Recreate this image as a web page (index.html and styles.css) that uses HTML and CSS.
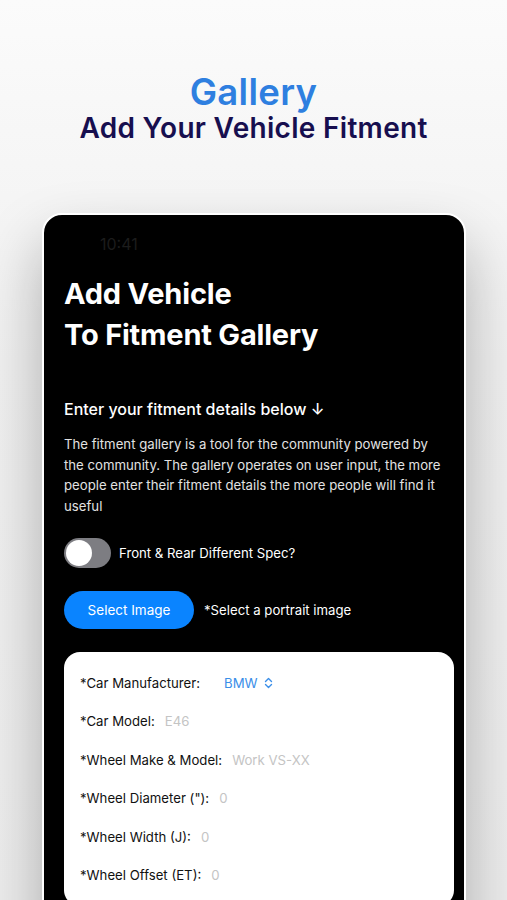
FILE: index.html
```html
<!DOCTYPE html>
<html lang="en">
<head>
	<meta charset="UTF-8">
	<title>Gallery</title>
	<link rel="stylesheet" href="styles.css">
</head>
<body>
	<div class="header">
		<h1 class="title">Gallery</h1>
		<p class="subtitle">Add Your Vehicle Fitment</p>
	</div>

	<div class="phone">
		<div class="statusBar">10:41</div>
		<h2 class="pageTitle">Add Vehicle<br>To Fitment Gallery</h2>
		<h3 class="sectionTitle">Enter your fitment details below ↓</h3>
		<p class="intro">The fitment gallery is a tool for the community powered by the community. The gallery operates on user input, the more people enter their fitment details the more people will find it useful</p>

		<div class="toggleRow">
			<span class="toggle"><span class="knob"></span></span>
			<span>Front &amp; Rear Different Spec?</span>
		</div>

		<div class="imageRow">
			<button class="btnSelect">Select Image</button>
			<span>*Select a portrait image</span>
		</div>

		<div class="form">
			<div class="formRow">
				<span class="label">*Car Manufacturer:</span>
				<span class="picker">BMW
					<svg width="9" height="12" viewBox="0 0 9 12"><path d="M1.5 4.5 4.5 1.5 7.5 4.5M1.5 7.5 4.5 10.5 7.5 7.5" fill="none" stroke="currentColor" stroke-width="1.4" stroke-linecap="round" stroke-linejoin="round"/></svg>
				</span>
			</div>
			<div class="formRow">
				<span class="label">*Car Model:</span>
				<span class="value">E46</span>
			</div>
			<div class="formRow">
				<span class="label">*Wheel Make &amp; Model:</span>
				<span class="value">Work VS-XX</span>
			</div>
			<div class="formRow">
				<span class="label">*Wheel Diameter ("):</span>
				<span class="value">0</span>
			</div>
			<div class="formRow">
				<span class="label">*Wheel Width (J):</span>
				<span class="value">0</span>
			</div>
			<div class="formRow">
				<span class="label">*Wheel Offset (ET):</span>
				<span class="value">0</span>
			</div>
		</div>
	</div>
</body>
</html>
```

FILE: styles.css
```css
body{
	margin: 0px;
	height: 900px;
	overflow: hidden;
	background: linear-gradient(180deg, #fbfbfb 0%, #f0f0f0 40%, #ececec 100%);
	font-family: Inter, "Liberation Sans", sans-serif;
}
.header{
	padding-top: 72px;
	text-align: center;
}
.title{
	margin: 0px;
	font-size: 36.5px;
	line-height: 40px;
	font-weight: 600;
	color: #2e7fe0;
	letter-spacing: 0.3px;
}
.subtitle{
	margin: 0px;
	font-size: 28px;
	line-height: 32px;
	font-weight: 600;
	color: #170f4f;
	letter-spacing: 0.3px;
}

.phone{
	margin: 69px 0px 0px 42px;
	width: 424px;
	height: 760px;
	box-sizing: border-box;
	border: 2px solid #ffffff;
	border-radius: 20px;
	background-color: #000000;
	box-shadow: 0px 30px 60px rgba(0,0,0,0.28);
	padding: 18px 10px 0px 20px;
	color: #ffffff;
}
.statusBar{
	margin-left: 36px;
	font-size: 16px;
	line-height: 22px;
	color: #1c1c1c;
}
.pageTitle{
	margin: 18px 0px 0px 0px;
	font-size: 29px;
	line-height: 41px;
	font-weight: 700;
	letter-spacing: -0.2px;
}
.sectionTitle{
	margin: 43px 0px 0px 0px;
	font-size: 16px;
	line-height: 22px;
	font-weight: 500;
}
.intro{
	margin: 14px 0px 0px 0px;
	width: 382px;
	font-size: 13.2px;
	line-height: 20.7px;
	color: #e2e2e2;
}
.toggleRow{
	margin-top: 21px;
	display: flex;
	align-items: center;
	gap: 8px;
	font-size: 13.2px;
}
.toggle{
	width: 47px;
	height: 30px;
	border-radius: 15px;
	background-color: #7d7d82;
	display: flex;
	align-items: center;
	padding-left: 2px;
	box-sizing: border-box;
}
.knob{
	width: 26px;
	height: 26px;
	border-radius: 50%;
	background-color: #ffffff;
}
.imageRow{
	margin-top: 23px;
	display: flex;
	align-items: center;
	gap: 10px;
	font-size: 13.2px;
}
.btnSelect{
	width: 130px;
	height: 38px;
	border: none;
	border-radius: 19px;
	background-color: #0a84ff;
	color: #ffffff;
	font-family: inherit;
	font-size: 13.5px;
}
.form{
	margin-top: 23px;
	width: 390px;
	background-color: #ffffff;
	border-radius: 16px;
	padding: 12px 16px;
	box-sizing: border-box;
	color: #111111;
}
.formRow{
	height: 38.4px;
	display: flex;
	align-items: center;
	gap: 10px;
	font-size: 13.2px;
}
.formRow:first-child .label{
	width: 134px;
}
.value{
	color: #c4c4c4;
}
.picker{
	color: #3a8ee8;
	display: flex;
	align-items: center;
	gap: 6px;
}
```
